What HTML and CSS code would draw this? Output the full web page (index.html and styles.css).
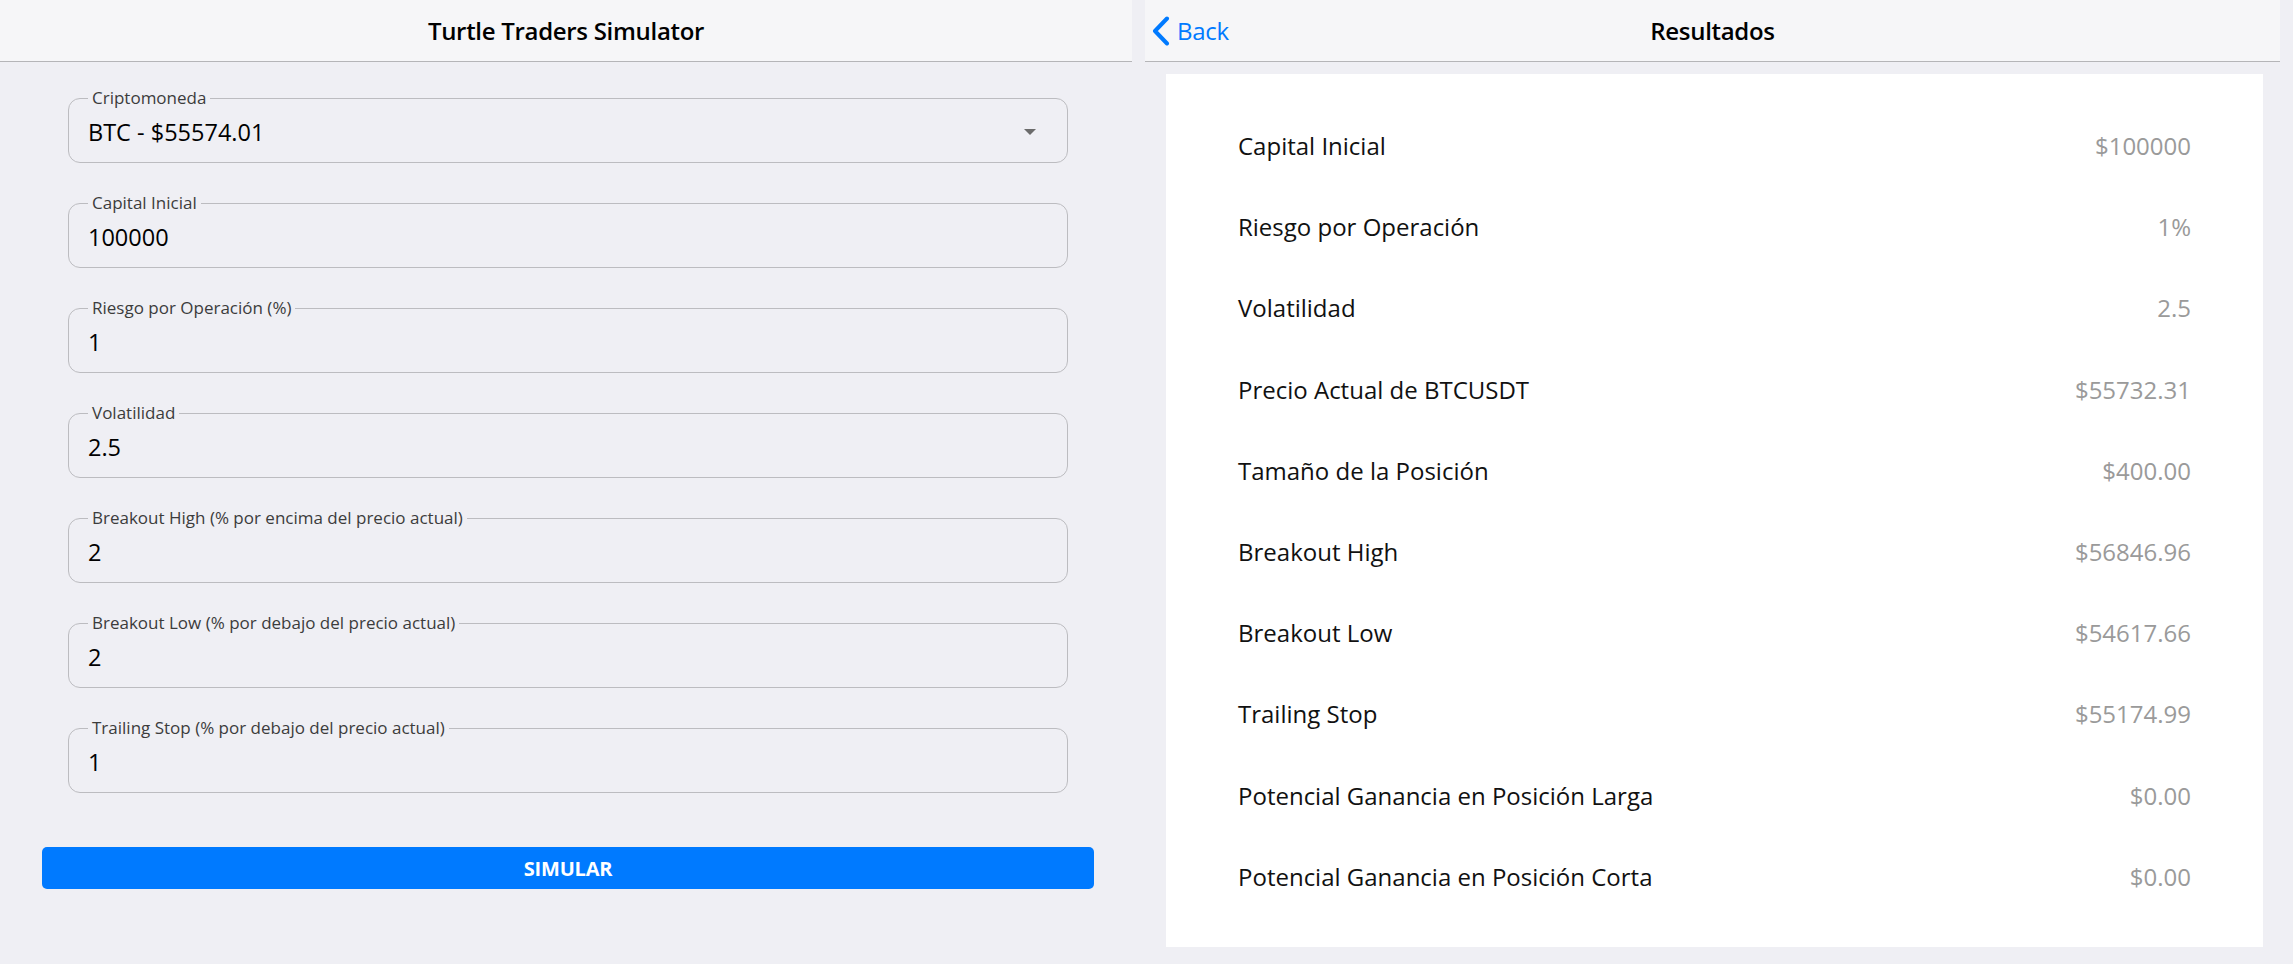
FILE: index.html
```html
<!DOCTYPE html>
<html lang="es">
<head>
<meta charset="utf-8">
<title>Turtle Traders Simulator</title>
<link rel="stylesheet" href="styles.css">
</head>
<body>
<div class="app">
  <section class="pane pane-form">
    <header class="toolbar">
      <h1 class="title">Turtle Traders Simulator</h1>
    </header>
    <div class="form-content">
      <fieldset class="field">
        <legend class="field-label">Criptomoneda</legend>
        <div class="field-value"><span>BTC - $55574.01</span><span class="caret"></span></div>
      </fieldset>
      <fieldset class="field">
        <legend class="field-label">Capital Inicial</legend>
        <div class="field-value"><span>100000</span></div>
      </fieldset>
      <fieldset class="field">
        <legend class="field-label">Riesgo por Operación (%)</legend>
        <div class="field-value"><span>1</span></div>
      </fieldset>
      <fieldset class="field">
        <legend class="field-label">Volatilidad</legend>
        <div class="field-value"><span>2.5</span></div>
      </fieldset>
      <fieldset class="field">
        <legend class="field-label">Breakout High (% por encima del precio actual)</legend>
        <div class="field-value"><span>2</span></div>
      </fieldset>
      <fieldset class="field">
        <legend class="field-label">Breakout Low (% por debajo del precio actual)</legend>
        <div class="field-value"><span>2</span></div>
      </fieldset>
      <fieldset class="field">
        <legend class="field-label">Trailing Stop (% por debajo del precio actual)</legend>
        <div class="field-value"><span>1</span></div>
      </fieldset>
      <button class="btn-sim" type="button">SIMULAR</button>
    </div>
  </section>
  <section class="pane pane-results">
    <header class="toolbar toolbar-results">
      <a class="back" href="#">
        <svg class="back-icon" width="20" height="30" viewBox="0 0 20 30" aria-hidden="true">
          <polyline points="16,2.5 4,15 16,27.5" fill="none" stroke="#007aff" stroke-width="4" stroke-linecap="round" stroke-linejoin="round"/>
        </svg>
        <span>Back</span>
      </a>
      <h1 class="title">Resultados</h1>
      <span class="spacer"></span>
    </header>
    <div class="card">
      <div class="row"><span class="row-label">Capital Inicial</span><span class="row-value">$100000</span></div>
      <div class="row"><span class="row-label">Riesgo por Operación</span><span class="row-value">1%</span></div>
      <div class="row"><span class="row-label">Volatilidad</span><span class="row-value">2.5</span></div>
      <div class="row"><span class="row-label">Precio Actual de BTCUSDT</span><span class="row-value">$55732.31</span></div>
      <div class="row"><span class="row-label">Tamaño de la Posición</span><span class="row-value">$400.00</span></div>
      <div class="row"><span class="row-label">Breakout High</span><span class="row-value">$56846.96</span></div>
      <div class="row"><span class="row-label">Breakout Low</span><span class="row-value">$54617.66</span></div>
      <div class="row"><span class="row-label">Trailing Stop</span><span class="row-value">$55174.99</span></div>
      <div class="row"><span class="row-label">Potencial Ganancia en Posición Larga</span><span class="row-value">$0.00</span></div>
      <div class="row"><span class="row-label">Potencial Ganancia en Posición Corta</span><span class="row-value">$0.00</span></div>
    </div>
  </section>
</div>
</body>
</html>
```

FILE: styles.css
```css
* { box-sizing: border-box; }

html, body {
  margin: 0;
  padding: 0;
}

body {
  width: 2293px;
  height: 964px;
  overflow: hidden;
  background: #efeff4;
  font-family: "Open Sans", "Noto Sans", sans-serif;
  color: #000;
}

.app {
  display: flex;
  gap: 13px;
  height: 964px;
}

.pane {
  display: flex;
  flex-direction: column;
}

.pane-form { width: 1132px; }
.pane-results { width: 1135px; }

.toolbar {
  height: 62px;
  flex: none;
  background: #f6f6f8;
  border-bottom: 1px solid #b5b5b8;
  display: flex;
  align-items: center;
  justify-content: center;
}

.title {
  margin: 0;
  font-size: 24px;
  font-weight: 600;
  letter-spacing: -0.3px;
  line-height: 30px;
}

.toolbar-results {
  display: grid;
  grid-template-columns: 1fr auto 1fr;
  align-items: center;
}

.back {
  justify-self: start;
  display: flex;
  align-items: center;
  gap: 6px;
  margin-left: 6px;
  color: #007aff;
  text-decoration: none;
  font-size: 24px;
  letter-spacing: -0.3px;
}

.back-icon { display: block; }

.form-content {
  display: flex;
  flex-direction: column;
  gap: 29px;
  padding: 25px 38px 0 42px;
}

.field {
  margin: 0 26px;
  min-width: 0;
  border: 1px solid #bcbcc0;
  border-radius: 12px;
  padding: 8px 31px 15px 19px;
}

.field-label {
  padding: 0 4px;
  font-size: 17px;
  line-height: 22px;
  color: #3c3c3c;
}

.field-value {
  display: flex;
  align-items: center;
  justify-content: space-between;
  height: 30px;
  font-size: 23.5px;
  line-height: 30px;
}

.caret {
  width: 0;
  height: 0;
  border-left: 6px solid transparent;
  border-right: 6px solid transparent;
  border-top: 6px solid #6b6b6b;
}

.btn-sim {
  margin-top: 25px;
  height: 42px;
  border: none;
  border-radius: 5px;
  background: #007aff;
  color: #fff;
  font-family: inherit;
  font-weight: 700;
  font-size: 20px;
  letter-spacing: -0.2px;
}

.card {
  margin: 12px 17px 0 21px;
  height: 873px;
  background: #fff;
  padding: 31px 72px 0 72px;
  display: flex;
  flex-direction: column;
}

.row {
  height: 81.2px;
  flex: none;
  display: flex;
  align-items: center;
  justify-content: space-between;
  font-size: 24px;
}

.row-label { color: #111; }
.row-value { color: #9a9a9a; }
```
